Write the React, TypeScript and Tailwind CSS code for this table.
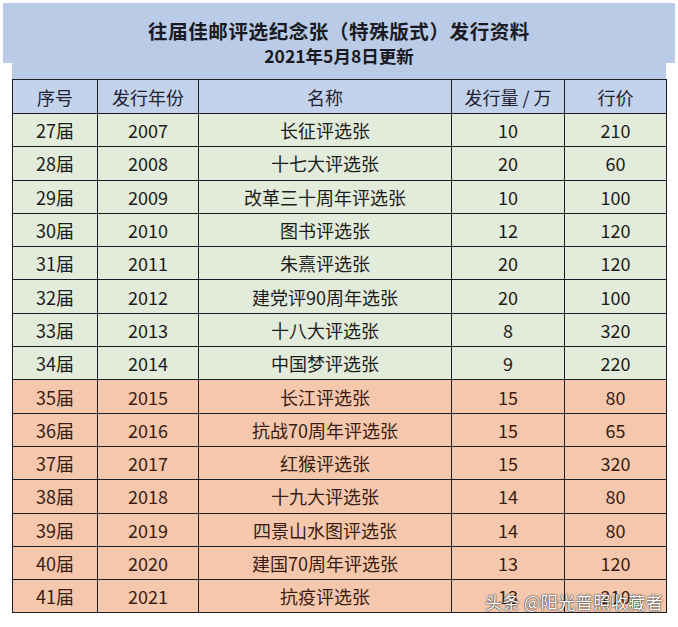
import React from "react";

type Row = [string, string, string, string, string];

const greenRows: Row[] = [
  ["27届", "2007", "长征评选张", "10", "210"],
  ["28届", "2008", "十七大评选张", "20", "60"],
  ["29届", "2009", "改革三十周年评选张", "10", "100"],
  ["30届", "2010", "图书评选张", "12", "120"],
  ["31届", "2011", "朱熹评选张", "20", "120"],
  ["32届", "2012", "建党评90周年选张", "20", "100"],
  ["33届", "2013", "十八大评选张", "8", "320"],
  ["34届", "2014", "中国梦评选张", "9", "220"],
];

const orangeRows: Row[] = [
  ["35届", "2015", "长江评选张", "15", "80"],
  ["36届", "2016", "抗战70周年评选张", "15", "65"],
  ["37届", "2017", "红猴评选张", "15", "320"],
  ["38届", "2018", "十九大评选张", "14", "80"],
  ["39届", "2019", "四景山水图评选张", "14", "80"],
  ["40届", "2020", "建国70周年评选张", "13", "120"],
  ["41届", "2021", "抗疫评选张", "13", "210"],
];

const font = "font-['Noto_Sans_CJK_SC','Noto_Sans',sans-serif]";
const cell = "border-[1.5px] border-[#1d1d28] text-center p-0";

function DataRow({ row, tone }: { row: Row; tone: "green" | "orange" }) {
  const bg = tone === "green" ? "bg-[#e3ebda] text-[#1c1c1c]" : "bg-[#f5c8ad] text-[#3a1c12]";
  return (
    <tr className={`h-[33.3px] ${bg}`}>
      {row.map((v, i) => (
        <td key={i} className={cell}>
          {v}
        </td>
      ))}
    </tr>
  );
}

export default function App() {
  return (
    <div className={`relative w-[678px] h-[627px] bg-white pt-[3px] ${font}`}>
      {/* title block */}
      <div className="mx-[3px] h-[76px] bg-[#b9cbe6] flex flex-col items-center pt-[15px] [clip-path:polygon(0_0,100%_0,100%_60px,663px_60px,663px_100%,9px_100%,9px_60px,0_60px)]">
        <div className="text-[19.5px] leading-[26px] font-bold text-[#1a1a22] tracking-[0.6px]">
          往届佳邮评选纪念张（特殊版式）发行资料
        </div>
        <div className="text-[17.5px] leading-[24px] font-bold text-[#1a1a22]">
          2021年5月8日更新
        </div>
      </div>

      <table className="ml-[12px] w-[654px] border-collapse table-fixed text-[18px] leading-none">
        <colgroup>
          <col className="w-[85px]" />
          <col className="w-[101px]" />
          <col className="w-[253px]" />
          <col className="w-[113px]" />
          <col className="w-[102px]" />
        </colgroup>
        <thead>
          <tr className="h-[34px] bg-[#c3d3ec] text-[#222230]">
            <th className={`${cell} font-normal`}>序号</th>
            <th className={`${cell} font-normal`}>发行年份</th>
            <th className={`${cell} font-normal`}>名称</th>
            <th className={`${cell} font-normal`}>发行量 / 万</th>
            <th className={`${cell} font-normal`}>行价</th>
          </tr>
        </thead>
        <tbody>
          {greenRows.map((r) => (
            <DataRow key={r[0]} row={r} tone="green" />
          ))}
          {orangeRows.map((r) => (
            <DataRow key={r[0]} row={r} tone="orange" />
          ))}
        </tbody>
      </table>

      {/* watermark */}
      <div className="absolute left-[485px] top-[590px] text-[17.5px] leading-[24px] text-white [text-shadow:0_0_2px_rgba(0,0,0,0.8),0_0_1px_rgba(0,0,0,0.9)]">
        头条 @阳光普照收藏者
      </div>
    </div>
  );
}
